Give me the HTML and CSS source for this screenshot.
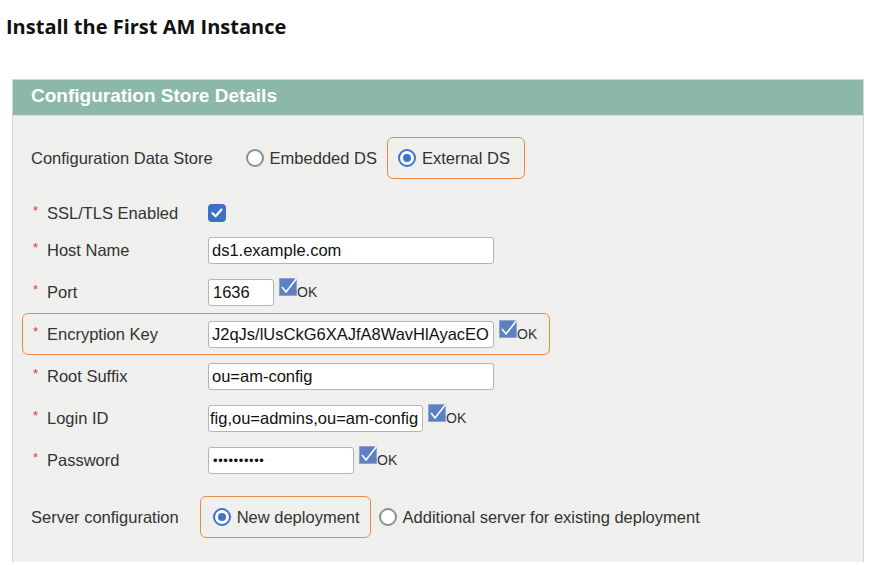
FILE: index.html
```html
<!DOCTYPE html>
<html>
<head>
<meta charset="utf-8">
<link rel="stylesheet" href="styles.css">
</head>
<body>
<h1 class="title">Install the First AM Instance</h1>
<div class="panel">
  <div class="panel-head">Configuration Store Details</div>
  <div class="panel-body">
    <div class="choice-row">
      <span class="choice-label cfg-label">Configuration Data Store</span>
      <span class="opt"><span class="radio"></span>Embedded DS</span>
      <span class="opt hl ext"><span class="radio on"></span>External DS</span>
    </div>

    <div class="field-row ssl">
      <span class="label"><span class="req">*</span>SSL/TLS Enabled</span>
      <span class="check"><svg width="18" height="18" viewBox="0 0 18 18"><path d="M4.5 9.2 L7.6 12.3 L13.5 5.6" fill="none" stroke="#fff" stroke-width="2.2" stroke-linecap="round" stroke-linejoin="round"/></svg></span>
    </div>

    <div class="field-row">
      <span class="label"><span class="req">*</span>Host Name</span>
      <span class="input w-long">ds1.example.com</span>
    </div>

    <div class="field-row">
      <span class="label"><span class="req">*</span>Port</span>
      <span class="input w-port">1636</span>
      <span class="ok"><svg class="okbox" width="18" height="18" viewBox="0 0 18 18"><rect x="0.5" y="0.5" width="17" height="17" fill="#5b81c3" stroke="#8ea5cf"/><path d="M3 9 L7 14 L17.5 0.5" fill="none" stroke="#fff" stroke-width="1.6"/></svg><span class="oktxt">OK</span></span>
    </div>

    <div class="field-row hl">
      <span class="label"><span class="req">*</span>Encryption Key</span>
      <span class="input w-long">J2qJs/lUsCkG6XAJfA8WavHlAyacEO</span>
      <span class="ok"><svg class="okbox" width="18" height="18" viewBox="0 0 18 18"><rect x="0.5" y="0.5" width="17" height="17" fill="#5b81c3" stroke="#8ea5cf"/><path d="M3 9 L7 14 L17.5 0.5" fill="none" stroke="#fff" stroke-width="1.6"/></svg><span class="oktxt">OK</span></span>
    </div>

    <div class="field-row">
      <span class="label"><span class="req">*</span>Root Suffix</span>
      <span class="input w-long">ou=am-config</span>
    </div>

    <div class="field-row">
      <span class="label"><span class="req">*</span>Login ID</span>
      <span class="input w-login">fig,ou=admins,ou=am-config</span>
      <span class="ok"><svg class="okbox" width="18" height="18" viewBox="0 0 18 18"><rect x="0.5" y="0.5" width="17" height="17" fill="#5b81c3" stroke="#8ea5cf"/><path d="M3 9 L7 14 L17.5 0.5" fill="none" stroke="#fff" stroke-width="1.6"/></svg><span class="oktxt">OK</span></span>
    </div>

    <div class="field-row">
      <span class="label"><span class="req">*</span>Password</span>
      <span class="input w-pass pass">••••••••••</span>
      <span class="ok"><svg class="okbox" width="18" height="18" viewBox="0 0 18 18"><rect x="0.5" y="0.5" width="17" height="17" fill="#5b81c3" stroke="#8ea5cf"/><path d="M3 9 L7 14 L17.5 0.5" fill="none" stroke="#fff" stroke-width="1.6"/></svg><span class="oktxt">OK</span></span>
    </div>

    <div class="choice-row server">
      <span class="choice-label srv-label">Server configuration</span>
      <span class="opt hl newdep"><span class="radio on"></span>New deployment</span>
      <span class="opt addl"><span class="radio"></span>Additional server for existing deployment</span>
    </div>
  </div>
</div>
</body>
</html>
```

FILE: styles.css
```css
html, body {
  margin: 0;
  padding: 0;
  background: #ffffff;
}

body {
  font-family: "Liberation Sans", Arial, sans-serif;
  font-size: 16.5px;
  color: #333333;
}

.title {
  margin: 0;
  padding: 15px 0 0 6px;
  font-family: "Open Sans", sans-serif;
  font-weight: 700;
  font-size: 20px;
  line-height: 24px;
  color: #111111;
}

.panel {
  margin: 40px 6px 0 12px;
  border: 1px solid #d6d6d6;
  border-bottom: none;
  background: #efefee;
}

.panel-head {
  box-sizing: border-box;
  height: 36px;
  padding: 5px 0 0 18px;
  background: #8bb8a9;
  color: #ffffff;
  font-weight: 700;
  font-size: 19px;
  line-height: 22px;
  border-bottom: 1px solid #d9dedb;
}

.panel-body {
  padding: 21px 0 24px 9px;
}

.choice-row {
  display: flex;
  align-items: center;
  height: 42px;
  padding-left: 9px;
}

.choice-label {
  color: #333333;
}

.cfg-label {
  margin-right: 32px;
}

.srv-label {
  margin-right: 21px;
}

.opt {
  display: flex;
  align-items: center;
  gap: 6px;
  box-sizing: border-box;
  height: 42px;
  border: 1px solid transparent;
  border-radius: 6px;
  color: #333333;
}

.opt.hl {
  border-color: #ee8a47;
}

.ext {
  margin-left: 9px;
  padding: 0 14px 0 10px;
}

.newdep {
  padding: 0 10px 0 12px;
}

.addl {
  margin-left: 7px;
}

.radio {
  box-sizing: border-box;
  width: 18px;
  height: 18px;
  border-radius: 50%;
  border: 2px solid #8e8e8e;
  background: #ffffff;
  display: flex;
  align-items: center;
  justify-content: center;
  flex: none;
}

.radio.on {
  border: 2px solid #3b74cf;
}

.radio.on::after {
  content: "";
  width: 8px;
  height: 8px;
  border-radius: 50%;
  background: #3b74cf;
}

.field-row {
  display: flex;
  align-items: center;
  box-sizing: border-box;
  width: max-content;
  height: 42px;
  padding: 0 12px 0 10px;
  border: 1px solid transparent;
  border-radius: 6px;
}

.field-row.ssl {
  margin-top: 18px;
  height: 32px;
}

.field-row.hl {
  border-color: #ee8a47;
}

.server {
  margin-top: 15px;
}

.label {
  display: flex;
  align-items: center;
  width: 175px;
  flex: none;
  color: #333333;
}

.req {
  width: 14px;
  color: #e0383a;
  font-size: 13px;
  position: relative;
  top: -3px;
}

.check {
  width: 18px;
  height: 18px;
  border-radius: 4px;
  background: #3d70c6;
  display: flex;
}

.input {
  box-sizing: border-box;
  height: 27px;
  padding: 0 3px;
  background: #ffffff;
  border: 1px solid #b4b4b4;
  border-radius: 3px;
  color: #111111;
  line-height: 25px;
  white-space: nowrap;
  overflow: hidden;
}

.w-long { width: 286px; }
.w-port { width: 66px; padding-left: 4px; }
.w-login { width: 215px; padding-left: 1px; }
.w-pass { width: 146px; padding-left: 4px; }

.pass {
  font-size: 13px;
  letter-spacing: 0.6px;
}

.ok {
  display: flex;
  align-items: flex-end;
  align-self: flex-start;
  margin-top: 6px;
  margin-left: 5px;
}

.okbox {
  display: block;
}

.oktxt {
  font-size: 14px;
  line-height: 13px;
  color: #333333;
  margin-bottom: -3px;
}
```
